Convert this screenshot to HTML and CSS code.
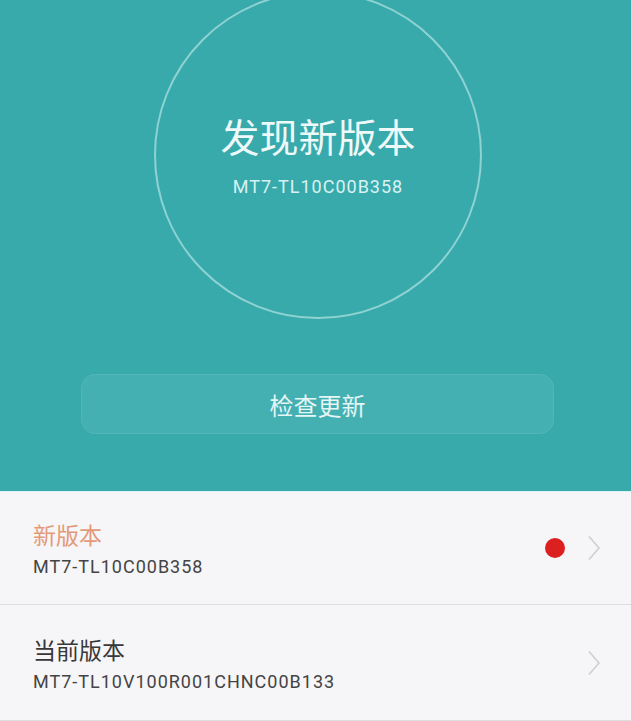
FILE: index.html
```html
<!DOCTYPE html>
<html lang="zh-CN">
<head>
<meta charset="utf-8">
<title>系统更新</title>
<link rel="stylesheet" href="styles.css">
</head>
<body>
<div class="page">
  <header class="hero">
    <div class="ring">
      <div class="ring-title">发现新版本</div>
      <div class="ring-sub">MT7-TL10C00B358</div>
    </div>
    <button class="check">检查更新</button>
  </header>
  <ul class="list">
    <li class="row">
      <div class="texts">
        <div class="label label-new">新版本</div>
        <div class="value">MT7-TL10C00B358</div>
      </div>
      <span class="dot"></span>
      <svg class="chev" width="14" height="26" viewBox="0 0 14 26"><path d="M2 1.5 L12 13 L2 24.5" fill="none" stroke="#cfcfd3" stroke-width="1.6"/></svg>
    </li>
    <li class="row">
      <div class="texts">
        <div class="label">当前版本</div>
        <div class="value">MT7-TL10V100R001CHNC00B133</div>
      </div>
      <svg class="chev" width="14" height="26" viewBox="0 0 14 26"><path d="M2 1.5 L12 13 L2 24.5" fill="none" stroke="#cfcfd3" stroke-width="1.6"/></svg>
    </li>
  </ul>
</div>
</body>
</html>
```

FILE: styles.css
```css
html, body {
  margin: 0;
  padding: 0;
  background: #f6f5f8;
  font-family: "Roboto", "Noto Sans CJK SC", sans-serif;
}
.page {
  width: 631px;
  height: 721px;
  overflow: hidden;
}
.hero {
  height: 492px;
  background: #39aaac;
  display: flex;
  flex-direction: column;
  align-items: center;
  overflow: hidden;
  border-bottom: 1px solid #d8f4f4;
  box-sizing: border-box;
}
.ring {
  width: 328px;
  height: 328px;
  margin-top: -9px;
  margin-left: 5px;
  border: 2px solid #8ed2d2;
  border-radius: 50%;
  box-sizing: border-box;
  display: flex;
  flex-direction: column;
  align-items: center;
  justify-content: center;
  color: #eef9f9;
}
.ring-title {
  font-family: "Noto Sans CJK SC", sans-serif;
  font-size: 39px;
  line-height: 46px;
  margin-top: 0;
}
.ring-sub {
  font-size: 18px;
  line-height: 22px;
  letter-spacing: 1px;
  margin-top: 18px;
  color: #d8f2f2;
}
.check {
  margin-top: 55px;
  margin-left: 4px;
  width: 473px;
  height: 60px;
  border-radius: 14px;
  border: 1px solid #52b6b8;
  background: #44b0b2;
  color: #e4f6f6;
  font-family: "Noto Sans CJK SC", sans-serif;
  font-size: 24px;
  padding: 0;
}
.list {
  list-style: none;
  margin: 0;
  padding: 0;
}
.row {
  height: 113px;
  display: flex;
  align-items: center;
  padding: 0 30px 0 33px;
  border-bottom: 1px solid #dddce0;
  box-sizing: border-box;
}
.row + .row {
  height: 116px;
}
.texts {
  flex: 1;
  display: flex;
  flex-direction: column;
  padding-top: 4px;
}
.label {
  font-family: "Noto Sans CJK SC", sans-serif;
  font-size: 23px;
  line-height: 30px;
  color: #383838;
  margin-top: -2px;
}
.label-new {
  color: #e39a78;
}
.value {
  font-size: 18px;
  line-height: 24px;
  letter-spacing: 1px;
  color: #444;
  margin-top: 6px;
}
.dot {
  width: 20px;
  height: 20px;
  border-radius: 50%;
  background: #dc2020;
  margin-right: 22px;
}
.chev {
  display: block;
}
```
